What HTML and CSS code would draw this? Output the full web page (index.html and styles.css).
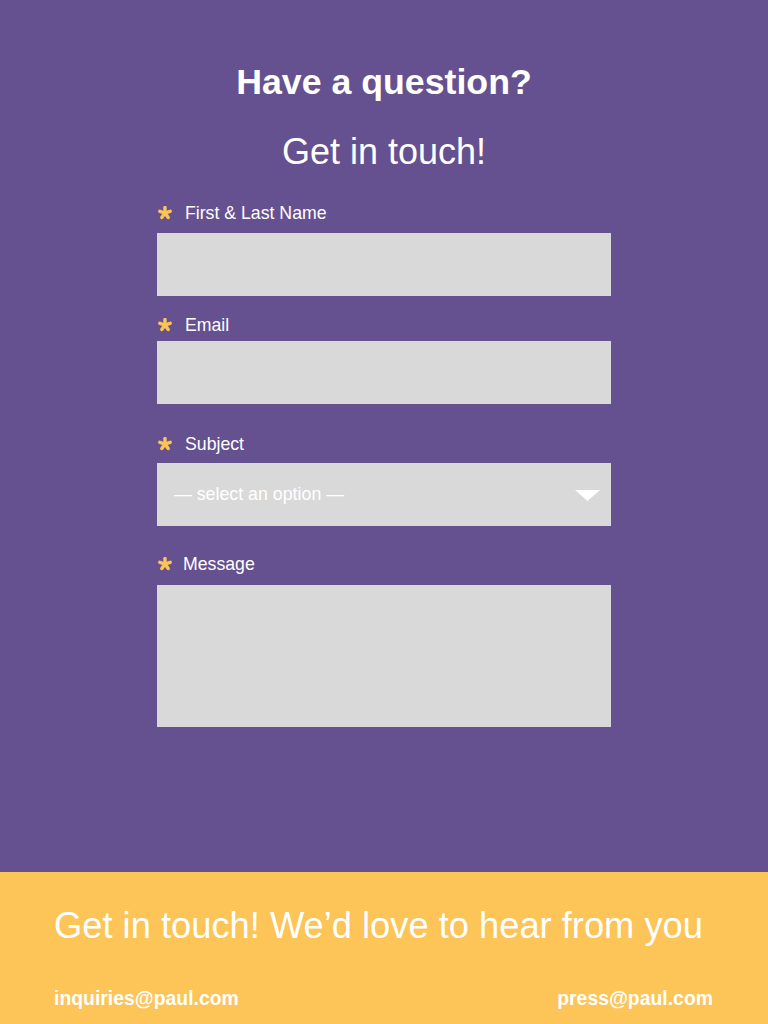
FILE: index.html
```html
<!DOCTYPE html>
<html lang="en">
<head>
<meta charset="utf-8">
<title>Contact</title>
<link rel="stylesheet" href="styles.css">
</head>
<body>
<main class="contact">
  <h1 class="contact__title">Have a question?</h1>
  <h2 class="contact__subtitle">Get in touch!</h2>
  <form class="form">
    <div class="field field--name">
      <label class="field__label"><svg class="star" viewBox="0 0 14 14"><g stroke="#fcc454" stroke-width="3.4" stroke-linecap="round"><line x1="7" y1="7" x2="7" y2="1.5"/><line x1="7" y1="7" x2="12.2" y2="5.3"/><line x1="7" y1="7" x2="10.2" y2="11.5"/><line x1="7" y1="7" x2="3.8" y2="11.5"/><line x1="7" y1="7" x2="1.8" y2="5.3"/></g></svg>First &amp; Last Name</label>
      <div class="field__input"></div>
    </div>
    <div class="field field--email">
      <label class="field__label"><svg class="star" viewBox="0 0 14 14"><g stroke="#fcc454" stroke-width="3.4" stroke-linecap="round"><line x1="7" y1="7" x2="7" y2="1.5"/><line x1="7" y1="7" x2="12.2" y2="5.3"/><line x1="7" y1="7" x2="10.2" y2="11.5"/><line x1="7" y1="7" x2="3.8" y2="11.5"/><line x1="7" y1="7" x2="1.8" y2="5.3"/></g></svg>Email</label>
      <div class="field__input"></div>
    </div>
    <div class="field field--subject">
      <label class="field__label"><svg class="star" viewBox="0 0 14 14"><g stroke="#fcc454" stroke-width="3.4" stroke-linecap="round"><line x1="7" y1="7" x2="7" y2="1.5"/><line x1="7" y1="7" x2="12.2" y2="5.3"/><line x1="7" y1="7" x2="10.2" y2="11.5"/><line x1="7" y1="7" x2="3.8" y2="11.5"/><line x1="7" y1="7" x2="1.8" y2="5.3"/></g></svg>Subject</label>
      <div class="field__input field__select">
        <span class="select__text">— select an option —</span>
        <svg class="select__arrow" viewBox="0 0 25 11"><polygon points="0,0 25,0 12.5,11" fill="#ffffff"/></svg>
      </div>
    </div>
    <div class="field field--message">
      <label class="field__label field__label--tight"><svg class="star" viewBox="0 0 14 14"><g stroke="#fcc454" stroke-width="3.4" stroke-linecap="round"><line x1="7" y1="7" x2="7" y2="1.5"/><line x1="7" y1="7" x2="12.2" y2="5.3"/><line x1="7" y1="7" x2="10.2" y2="11.5"/><line x1="7" y1="7" x2="3.8" y2="11.5"/><line x1="7" y1="7" x2="1.8" y2="5.3"/></g></svg>Message</label>
      <div class="field__input field__textarea"></div>
    </div>
  </form>
</main>
<footer class="footer">
  <p class="footer__title">Get in touch! We’d love to hear from you</p>
  <div class="footer__links">
    <span class="footer__link">inquiries@paul.com</span>
    <span class="footer__link">press@paul.com</span>
  </div>
</footer>
</body>
</html>
```

FILE: styles.css
```css
* { box-sizing: border-box; }
html, body { margin: 0; padding: 0; }
body {
  font-family: "Liberation Sans", Arial, Helvetica, sans-serif;
  color: #ffffff;
  width: 768px;
  height: 1024px;
  overflow: hidden;
  display: flex;
  flex-direction: column;
}
.contact {
  background: #65518f;
  height: 872px;
  padding-top: 62px;
  display: flex;
  flex-direction: column;
  align-items: center;
}
.contact__title {
  margin: 0;
  font-size: 35.7px;
  line-height: 40px;
  font-weight: bold;
}
.contact__subtitle {
  margin: 30px 0 0;
  font-size: 36px;
  line-height: 40px;
  font-weight: normal;
}
.form {
  width: 454px;
  margin-top: 29px;
  display: flex;
  flex-direction: column;
}
.field__label {
  display: flex;
  align-items: center;
  gap: 13px;
  font-size: 17.7px;
  line-height: 24px;
  height: 24px;
  padding-left: 1px;
}
.field__label--tight { gap: 11px; }
.star { width: 14px; height: 14px; display: block; }
.field__input {
  background: #d9d9d9;
  height: 63px;
}
.field--name .field__input { margin-top: 8px; }
.field--email { margin-top: 17px; }
.field--email .field__input { margin-top: 4px; }
.field--subject { margin-top: 28px; }
.field--subject .field__input { margin-top: 7px; }
.field--message { margin-top: 26px; }
.field--message .field__input { margin-top: 9px; }
.field__select {
  display: flex;
  align-items: center;
  justify-content: space-between;
  padding: 0 11px 0 17px;
}
.select__text { font-size: 17.8px; color: #ffffff; }
.select__arrow { width: 25px; height: 11px; display: block; margin-top: 1px; }
.field__textarea { height: 142px; }
.footer {
  background: #fdc457;
  height: 152px;
  padding: 34px 55px 0 54px;
}
.footer__title {
  margin: 0;
  font-size: 36.3px;
  line-height: 40px;
}
.footer__links {
  margin-top: 40px;
  display: flex;
  justify-content: space-between;
  font-weight: bold;
  font-size: 19.4px;
  line-height: 24px;
}
```
